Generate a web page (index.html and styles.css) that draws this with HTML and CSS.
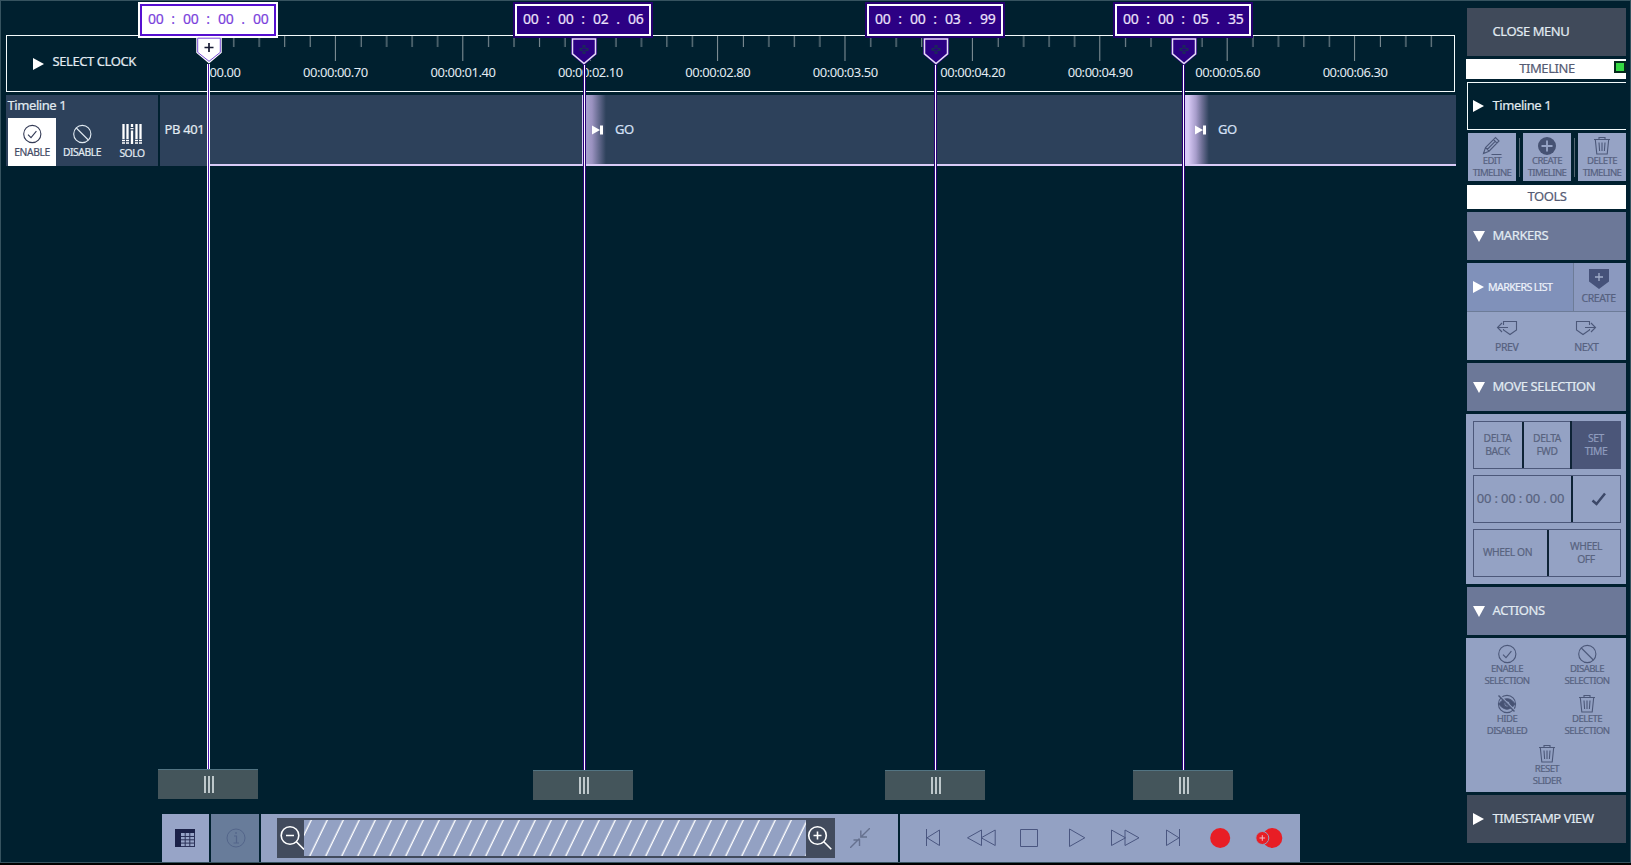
FILE: index.html
```html
<!DOCTYPE html>
<html lang="en">
<head>
<meta charset="utf-8">
<title>Timeline</title>
<link rel="stylesheet" href="styles.css">
</head>
<body>
<svg class="defs" width="0" height="0">
  <defs>
    <symbol id="check" viewBox="0 0 20 20"><circle cx="10.300" cy="10" r="8.6"/><path d="M6 10.600l3 3 5.400-6.400"/></symbol>
    <symbol id="ban" viewBox="0 0 20 20"><circle cx="10.300" cy="10" r="8.6"/><path d="M4.300 4l12 12"/></symbol>
    <symbol id="trash" viewBox="0 0 20 20"><path d="M2 3.5h16M7 3.300V1.500h6v1.800M3.300 3.500l1.500 14.500h10.400l1.500-14.500M7 6.500l.6 8.500M10 6.500v8.500M13 6.500l-.6 8.500"/></symbol>
    <symbol id="grip" viewBox="0 0 10 17"><path d="M1 0v17M5 0v17M9 0v17" stroke="#d3dcdf" stroke-width="1.700"/></symbol>
    <symbol id="step" viewBox="0 0 12 10"><path d="M0 .5l8 4.500-8 4.500zM8 .5h3v9H8z" fill="#fff"/></symbol>
    <symbol id="tag" viewBox="0 0 26 27"><path d="M1.500 1.200h23V15.500L13 25.500 1.500 15.500z" fill="#2c0084" stroke="#2a0080" stroke-width="3"/><path d="M1.500 1h23v14.800L13 25.500 1.500 15.800z" fill="#2c0084" stroke="#e6dcf5" stroke-width="1.500"/><path d="M13 7v9M8.500 11.500h9" stroke="#1b2a58" stroke-width="3"/><path d="M13 9v5M10.500 11.500h5" stroke="#2c0084" stroke-width="1"/></symbol>
  </defs>
</svg>
<div class="app">
  <main class="main">
    <section class="ruler">
      <div class="clock"><i class="tri-r"></i><span>SELECT CLOCK</span></div>
      <svg class="scale" width="1247" height="55" viewBox="208 36 1247 55">
        <defs>
          <pattern id="ticks" x="208" y="36" width="127.500" height="26" patternUnits="userSpaceOnUse">
            <path d="M25.300 0v11M50.800 0v11M76.300 0v11M101.800 0v11M127 0v25" stroke="#87959b" stroke-width="1"/>
          </pattern>
        </defs>
        <rect x="209" y="36" width="1244" height="26" fill="url(#ticks)" transform="translate(.5 0)"/>
        <g class="scale-text">
          <text x="209.500" y="77">00.00</text>
          <text class="mid" x="335.500" y="77">00:00:00.70</text>
          <text class="mid" x="463.200" y="77">00:00:01.40</text>
          <text class="mid" x="590.700" y="77">00:00:02.10</text>
          <text class="mid" x="718.200" y="77">00:00:02.80</text>
          <text class="mid" x="845.800" y="77">00:00:03.50</text>
          <text class="mid" x="973.300" y="77">00:00:04.20</text>
          <text class="mid" x="1100.800" y="77">00:00:04.90</text>
          <text class="mid" x="1228.400" y="77">00:00:05.60</text>
          <text class="mid" x="1356" y="77">00:00:06.30</text>
        </g>
      </svg>
    </section>
    <section class="track">
      <div class="track-info">
        <div class="track-name">Timeline 1</div>
        <div class="track-btns">
          <div class="tbtn on"><svg class="ic" width="20" height="20"><use href="#check"/></svg><span>ENABLE</span></div>
          <div class="tbtn"><svg class="ic" width="20" height="20"><use href="#ban"/></svg><span>DISABLE</span></div>
          <div class="tbtn solo"><svg width="20" height="20" viewBox="0 0 20 20"><path d="M1.500 0v15M5.500 0v15M14.500 0v15M18.500 0v15M10 6.500V20M10 0v3" stroke="#fff" stroke-width="2.300"/><path d="M8.500 4.700h3.500M0 16.500h7M0 19h7M13 16.500h7M13 19h7" stroke="#fff" stroke-width="1.300" stroke-dasharray="3 1"/></svg><span>SOLO</span></div>
        </div>
      </div>
      <div class="track-head">PB 401</div>
      <div class="lane">
        <div class="cue cue-a"><svg width="12" height="10"><use href="#step"/></svg><span>GO</span></div>
        <div class="cue cue-b"><svg width="12" height="10"><use href="#step"/></svg><span>GO</span></div>
      </div>
    </section>
    <div class="space"></div>
    <footer class="bar">
      <div class="cell first"><svg width="20" height="18" viewBox="0 0 20 18"><path d="M0 0h20v4H6v14H0z" fill="#1b2148"/><path d="M6 7.500h14M6 10.800h14M6 14.100h14M6 17.500h14M10.200 4v14M14.800 4v14M19.500 4v14" stroke="#2b3158" stroke-width="1"/></svg></div>
      <div class="cell dim"><svg width="20" height="20" viewBox="0 0 20 20" fill="none" stroke="#53658a"><circle cx="10" cy="10" r="9"/><path d="M8 8h2.500v7M7.500 15h5.500M10 4v2" stroke-width="1.200"/></svg></div>
      <div class="zoom">
        <div class="zoombar">
          <svg class="lens" width="27" height="40" viewBox="0 0 27 40"><circle cx="13" cy="17.500" r="8.800"/><path d="M9 17.500h8M19.300 23.800l7.700 7.700"/></svg>
          <svg class="hatch" width="502" height="36" viewBox="0 0 502 36">
            <defs><pattern id="hatch" width="16" height="36" patternUnits="userSpaceOnUse" patternTransform="skewX(-25.900)"><path d="M7.300 0v36" stroke="#fff" stroke-width="1.500"/></pattern></defs>
            <rect width="502" height="36" fill="url(#hatch)"/>
          </svg>
          <svg class="lens" width="29" height="40" viewBox="0 0 29 40"><circle cx="11.500" cy="17.500" r="8.800"/><path d="M7.500 17.500h8M11.500 13.500v8M17.800 23.800l7.500 7.500"/></svg>
        </div>
        <svg width="20" height="20" viewBox="0 0 20 20" fill="none" stroke="#66718f" stroke-width="1.400"><path d="M0 20l9.500-9.500M3.500 12h6v6M20 0l-9 9M10.800 2.500V9h6.200"/></svg>
      </div>
      <div class="transport">
        <svg width="48" height="48" viewBox="909 814 48 48"><path d="M926.500 829v17M939.500 830v15.500l-12.500-7.700z"/></svg>
        <svg width="48" height="48" viewBox="957 814 48 48"><path d="M981.500 830v15.500l-14-7.700zM995.200 830v15.500l-14-7.700z"/></svg>
        <svg width="48" height="48" viewBox="1005 814 48 48"><path d="M1020.500 829.500h17v17h-17z"/></svg>
        <svg width="48" height="48" viewBox="1053 814 48 48"><path d="M1069.500 829v17.500l15.300-8.700z"/></svg>
        <svg width="48" height="48" viewBox="1101 814 48 48"><path d="M1111.500 830v15.500l14-7.700zM1125 830v15.500l14-7.700z"/></svg>
        <svg width="48" height="48" viewBox="1149 814 48 48"><path d="M1166.500 830v15.500l12.500-7.700zM1179.500 829v17"/></svg>
        <svg width="48" height="48" viewBox="1197 814 48 48"><circle class="rec" cx="1220.200" cy="838" r="10"/></svg>
        <svg width="48" height="48" viewBox="1245 814 48 48"><circle class="rec" cx="1272.300" cy="838" r="10"/><circle cx="1262.300" cy="838" r="6.500" fill="#e81e25" stroke="#93a1c3" stroke-width="1"/><path class="plus" d="M1262.300 835.200v5.600M1259.500 838h5.600"/></svg>
      </div>
    </footer>
  </main>

  <aside class="side">
    <div class="head dark">CLOSE MENU</div>
    <div class="title t1">TIMELINE<i class="led"></i></div>
    <div class="pick"><i class="tri-r"></i><span>Timeline 1</span></div>
    <div class="trio">
      <div class="sbtn"><svg class="ic" width="20" height="20" viewBox="0 0 20 20"><path d="M1.500 17.500L3.500 11.500L13.500 1.500l3.500 3.500L7 15.200zM3.500 11.500L7 15.200M11.500 3.500l3.500 3.700M5.200 13.500l8-8.200M9.500 18.500h10"/></svg><span>EDIT<br>TIMELINE</span></div>
      <i class="sep"></i>
      <div class="sbtn"><svg width="20" height="20" viewBox="0 0 20 20"><circle cx="10" cy="10" r="9" fill="#465273"/><path d="M10 4.500v11M4.500 10h11" stroke="#96a3c5" stroke-width="1.800"/></svg><span>CREATE<br>TIMELINE</span></div>
      <i class="sep"></i>
      <div class="sbtn"><svg class="ic" width="20" height="20"><use href="#trash"/></svg><span>DELETE<br>TIMELINE</span></div>
    </div>
    <div class="title t2">TOOLS</div>
    <div class="head"><i class="tri-d"></i>MARKERS</div>
    <div class="markers">
      <div class="mlist"><i class="tri-r"></i><span>MARKERS LIST</span></div>
      <div class="mcreate"><svg width="20" height="20" viewBox="0 0 20 20"><path d="M0 0h20v12.500L10 20 0 12.500z" fill="#46527a"/><path d="M10 4v8M6 8h8" stroke="#a3aecb" stroke-width="1.300"/></svg><span>CREATE</span></div>
      <div class="mnav">
        <div><svg class="ic" width="22" height="16" viewBox="0 0 22 16"><path d="M7.500 5V1.500h13V10L14 14.500 7.500 10V9M12 7.500H2M6 3L1.500 7.500 6 12"/></svg><span>PREV</span></div>
        <div><svg class="ic" width="22" height="16" viewBox="0 0 22 16"><path d="M14.500 5V1.500h-13V10L8 14.500l6.500-4.500V9M10 7.500h10M16 3l4.500 4.500L16 12"/></svg><span>NEXT</span></div>
      </div>
    </div>
    <div class="head"><i class="tri-d"></i>MOVE SELECTION</div>
    <div class="move">
      <div class="grp g3"><div>DELTA<br>BACK</div><div>DELTA<br>FWD</div><div class="sel">SET<br>TIME</div></div>
      <div class="grp g2"><div class="time">00 : 00 : 00 . 00</div><div class="ok"><svg width="16" height="14" viewBox="0 0 16 14"><path d="M1.500 8.500l4 3.500L14 1.500" fill="none" stroke="#3c4868" stroke-width="2.500"/></svg></div></div>
      <div class="grp gw"><div>WHEEL ON</div><div>WHEEL<br>OFF</div></div>
    </div>
    <div class="head"><i class="tri-d"></i>ACTIONS</div>
    <div class="actions">
      <div class="sbtn"><svg class="ic" width="20" height="20"><use href="#check"/></svg><span>ENABLE<br>SELECTION</span></div>
      <div class="sbtn"><svg class="ic" width="20" height="20"><use href="#ban"/></svg><span>DISABLE<br>SELECTION</span></div>
      <div class="sbtn"><svg class="ic" width="20" height="20" viewBox="0 0 20 20"><circle cx="10" cy="10" r="8.600"/><path d="M2 10q8-10.500 16 0-8 10.500-16 0z" fill="#465273"/><circle cx="10" cy="10" r="3" fill="#93a1c3"/><circle cx="10" cy="10" r="1.300" fill="#465273"/><path d="M3 1.500l15.500 15.500" stroke="#93a1c3" stroke-width="1.500"/><path d="M1.500 1.500l16 16" stroke-width="1.500"/></svg><span>HIDE<br>DISABLED</span></div>
      <div class="sbtn"><svg class="ic" width="20" height="20"><use href="#trash"/></svg><span>DELETE<br>SELECTION</span></div>
      <div class="sbtn wide"><svg class="ic" width="20" height="20"><use href="#trash"/></svg><span>RESET<br>SLIDER</span></div>
    </div>
    <div class="head dark"><i class="tri-r"></i>TIMESTAMP VIEW</div>
  </aside>

  <div class="marker m1 active">
    <div class="tc"><b>00</b><i>:</i><b>00</b><i>:</i><b>00</b><i>.</i><b>00</b></div>
    <svg class="tag" width="26" height="27" viewBox="0 0 26 27"><path d="M1 1h24v14.500L13 25.500 1 15.500z" fill="#fff" stroke="#fff" stroke-width="1.500"/><path d="M1.700 1.200h22.600V15.300L13 24.300 1.700 15.300z" fill="#fff" stroke="#7a4fd6" stroke-width="1"/><path d="M13 6v9M8.500 10.500h9" stroke="#161a33" stroke-width="1.700"/></svg>
    <div class="line"></div>
    <div class="handle"><svg width="10" height="17"><use href="#grip"/></svg></div>
  </div>
  <div class="marker m2">
    <div class="tc"><b>00</b><i>:</i><b>00</b><i>:</i><b>02</b><i>.</i><b>06</b></div>
    <svg class="tag" width="26" height="27"><use href="#tag"/></svg>
    <div class="line"></div>
    <div class="handle"><svg width="10" height="17"><use href="#grip"/></svg></div>
  </div>
  <div class="marker m3">
    <div class="tc"><b>00</b><i>:</i><b>00</b><i>:</i><b>03</b><i>.</i><b>99</b></div>
    <svg class="tag" width="26" height="27"><use href="#tag"/></svg>
    <div class="line"></div>
    <div class="handle"><svg width="10" height="17"><use href="#grip"/></svg></div>
  </div>
  <div class="marker m4">
    <div class="tc"><b>00</b><i>:</i><b>00</b><i>:</i><b>05</b><i>.</i><b>35</b></div>
    <svg class="tag" width="26" height="27"><use href="#tag"/></svg>
    <div class="line"></div>
    <div class="handle"><svg width="10" height="17"><use href="#grip"/></svg></div>
  </div>
</div>
</body>
</html>
```
FILE: styles.css
```css
* { box-sizing: border-box; }
body { margin: 0; background: #000; overflow: hidden; }
.defs { display: block; height: 0; }
svg { display: block; flex: none; }
.app {
  position: relative;
  width: 1631px;
  height: 863px;
  display: flex;
  justify-content: space-between;
  background: #00202f;
  border: 1px solid #36535f;
  font: 13px/16px "Noto Sans", "Open Sans", sans-serif;
  letter-spacing: -0.42px;
  -webkit-text-stroke: 0.2px;
  color: #e2ebf2;
}
.main { width: 1456px; padding: 34px 0 0 5px; display: flex; flex-direction: column; }

/* shared glyphs */
.tri-r { flex: none; width: 0; height: 0; border: solid transparent; border-width: 6px 0 6px 11px; border-left-color: #fff; }
.tri-d { flex: none; width: 0; height: 0; border: solid transparent; border-width: 11px 6px 0 6px; border-top-color: #fff; }
.ic { fill: none; stroke: #4c5879; stroke-width: 1.1; }

/* ruler */
.ruler { width: 1449px; height: 57px; border: 1px solid #f4fbfc; display: flex; }
.clock { width: 201px; flex: none; display: flex; align-items: center; gap: 8.5px; padding: 0 0 6px 26px; }
.clock .tri-r { margin-top: 6px; }
.scale { width: 1246px; }
.scale-text { fill: #e2ebf2; letter-spacing: -0.45px; }
.mid { text-anchor: middle; }

/* track */
.track { margin-top: 3px; height: 71px; width: 1450px; display: flex; }
.track-info { width: 152px; background: #2d415b; margin-right: 2px; padding: 2px 0 0 1.5px; }
.track-name { height: 21px; }
.track-btns { display: flex; gap: 2px; padding-left: 0.5px; }
.tbtn { width: 48px; height: 48px; padding-top: 6px; display: flex; flex-direction: column; align-items: center; font-size: 10.3px; line-height: 14px; }
.tbtn .ic { stroke: #e2ebf2; }
.tbtn span { margin-top: 1px; }
.tbtn.on { background: #fff; color: #454b66; }
.tbtn.on .ic { stroke: #343b56; }
.tbtn.solo span { margin-top: 2px; }
.track-head { width: 49px; background: #2d415b; padding: 26px 0 0 4.5px; white-space: nowrap; letter-spacing: -0.35px; }
.lane { position: relative; flex: 1; background: #2d415b; border-bottom: 2px solid #d9cbf7; }
.cue { position: absolute; top: 0; height: 69px; display: flex; align-items: center; }
.cue svg { margin-top: 1px; }
.cue span { color: #d5e0f5; margin-top: -2px; }
.cue-a { left: 373px; padding-left: 10px; gap: 11px; background: linear-gradient(90deg, #d9cbf7 1px, #a9a2cf 4px, #9a92c0 10px, #2d415b 24px); }
.cue-b { left: 975px; padding-left: 11px; gap: 11px; background: linear-gradient(90deg, #d9cbf7 4px, #a79dcb 12px, #6d6f95 18px, #2d415b 25px); }

.space { flex: 1; }

/* bottom bar */
.bar { height: 48px; display: flex; gap: 2px; padding-left: 155px; }
.cell { width: 48px; background: #97a4c7; display: flex; align-items: center; justify-content: center; padding-left: 1px; }
.cell.first { width: 47.5px; margin-left: 0.5px; padding-left: 0; }
.cell.dim { background: #687c9a; }
.zoom { width: 637px; background: #93a1c3; display: flex; align-items: center; padding-left: 16px; gap: 15px; }
.zoombar { width: 558px; height: 40px; background: #424b5d; display: flex; align-items: center; }
.lens { fill: none; stroke: #fff; stroke-width: 1.6; }
.hatch { background: #93a1c3; }
.transport { width: 400px; background: #93a1c3; padding-left: 9px; display: flex; }
.transport svg { fill: none; stroke: #4a5680; stroke-width: 1; }
.transport .rec { fill: #e81e25; stroke: none; }
.transport .plus { stroke: #f0b8c4; }

/* markers */
.marker { position: absolute; top: 1px; width: 140px; height: 798px; display: flex; flex-direction: column; align-items: center; }
.m1 { left: 137px; }
.m2 { left: 512px; }
.m3 { left: 864px; }
.m4 { left: 1112px; }
.tc { flex: none; width: 140px; height: 36px; border: 2px solid #25006f; outline: 2px solid #fff; outline-offset: -4px; background: #2c0084; color: #ece2fb; font-size: 14px; letter-spacing: -0.3px; display: grid; grid-template-columns: 15px 20px 15px 20px 15px 20px 15px; justify-content: center; align-items: center; text-align: center; padding-bottom: 3px; }
.tc b, .tc i { font-weight: 400; font-style: normal; }
.tag { margin-left: 2px; }
.line { flex: 1; width: 3px; margin-left: 1px; background: #fff; border: solid #2a0078; border-width: 0 1px; }
.m2 .line { margin-left: 3px; }
.handle { flex: none; width: 100px; height: 30px; background: #44555b; border-top: 1px solid #527482; display: flex; align-items: center; justify-content: center; padding-left: 1px; }
.active { height: 797px; }
.active .tc { border-color: #fff; outline-color: #560fd0; background: #fff; color: #7a3fdc; }
.active .tag { margin-top: -1px; }
.active .line { background: #4a10b0; border-color: #fff; }

/* sidebar */
.side { width: 160px; margin-right: 4px; padding-top: 7px; display: flex; flex-direction: column; }
.head { flex: none; margin: 0 0 3px 1px; height: 48px; padding: 0 0 3px 25.5px; background: #6c7898; display: flex; align-items: center; }
.head.dark { background: #404a5a; }
.head .tri-d { margin: 3px 7.5px 0 -19.5px; }
.head .tri-r { margin: 3px 8.5px 0 -19.5px; }
.title { flex: none; position: relative; background: #fff; color: #555b73; text-align: center; }
.t1 { height: 20px; margin-bottom: 3px; padding: 1px 0 0 2px; }
.t2 { height: 24px; margin: 4px 0 3px 1px; padding: 3px 0 0 1px; }
.led { position: absolute; right: 0; top: 2px; width: 12px; height: 12px; background: #35d944; border: 2px solid #042a1c; }
.pick { flex: none; height: 48px; margin: 0 0 3px 1px; border: 1px solid #f4fbfc; border-right: 0; display: flex; align-items: center; gap: 8.5px; padding: 0 0 2px 5px; }
.pick .tri-r { margin-top: 2px; }
.trio { flex: none; height: 48px; padding-left: 2px; display: flex; align-items: center; justify-content: space-between; }
.trio .sbtn { width: 48px; height: 48px; background: #96a3c5; padding-top: 3px; }
.sep { width: 1px; height: 39px; background: #536673; }
.sbtn { display: flex; flex-direction: column; align-items: center; text-align: center; font-size: 9.6px; line-height: 12px; color: #56617f; letter-spacing: -0.6px; }
.sbtn span { margin-top: -1px; }
.markers { flex: none; height: 97px; margin: 0 0 3px 1px; background: #94a2c4; display: grid; grid-template: 49px 48px / 107px 52px; font-size: 10.5px; color: #56617f; }
.mlist { background: #8091ba; border-right: 1px solid #6d7c98; border-bottom: 1px solid #6d7c98; display: flex; align-items: center; gap: 4px; padding: 0 0 1px 6px; color: #eef2fa; font-size: 10.6px; letter-spacing: -0.6px; }
.mcreate { background: #8b99bf; border-bottom: 1px solid #6d7c98; display: flex; flex-direction: column; align-items: center; padding: 6px 3px 0 0; line-height: 14px; }
.mcreate span { margin-top: 2px; }
.mnav { grid-column: 1 / 3; display: flex; }
.mnav div { width: 80px; display: flex; flex-direction: column; align-items: center; padding-top: 8px; line-height: 14px; }
.mnav span { margin-top: 4px; }
.move { flex: none; height: 170px; background: #94a2c4; margin-bottom: 3px; padding: 7px 5px 0 7px; display: flex; flex-direction: column; gap: 6px; }
.grp { height: 48px; border: 1px solid #4c587a; display: grid; text-align: center; align-items: stretch; font-size: 10.3px; line-height: 12.6px; color: #58637f; }
.grp div { display: flex; align-items: center; justify-content: center; padding: 0 1px 1px 0; }
.grp div + div { border-left: 2px solid #0e2336; }
.g3 { grid-template-columns: 48px 49px 49px; }
.g2 { grid-template-columns: 97px 49px; }
.gw { grid-template-columns: 73px 73px; }
.gw div { padding-right: 6px; }
.gw div + div { padding: 0 0 1px 3px; }
.grp .sel { background: #4b5679; color: #8f9cbe; margin: -1px; }
.grp .ok { padding: 0 0 1px 4px; }
.grp .time { font-size: 13px; letter-spacing: -0.15px; padding: 0 4px 2px 0; white-space: nowrap; }
.actions { flex: none; height: 154px; background: #93a1c3; margin-bottom: 3px; padding: 6px 0 0 1px; display: grid; grid-template: repeat(3, 50px) / 80px 80px; align-content: start; overflow: hidden; }
.actions .wide { grid-column: 1 / 3; }
```
